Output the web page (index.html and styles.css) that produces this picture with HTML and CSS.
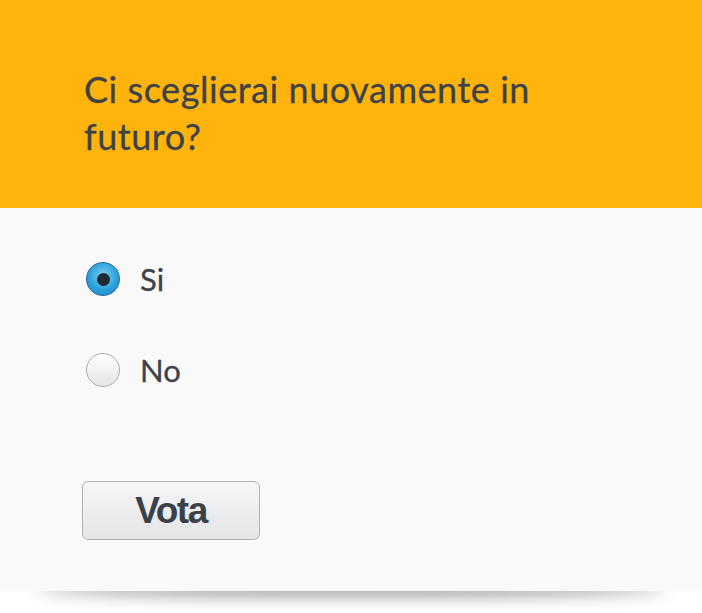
FILE: index.html
```html
<!DOCTYPE html>
<html lang="it">
<head>
<meta charset="utf-8">
<title>Sondaggio</title>
<link rel="stylesheet" href="styles.css">
</head>
<body>
<div class="card">
  <div class="header">
    <h1 class="question">Ci sceglierai nuovamente in futuro?</h1>
  </div>
  <form class="body">
    <label class="option">
      <span class="radio checked"><span class="dot"></span></span>
      <span class="label-text">Si</span>
    </label>
    <label class="option">
      <span class="radio"></span>
      <span class="label-text">No</span>
    </label>
    <button type="button" class="vote">Vota</button>
  </form>
</div>
</body>
</html>
```

FILE: styles.css
```css
html {
  margin: 0;
  padding: 0;
  background: #ffffff;
}
body {
  margin: 0;
  padding: 0;
  min-height: 613px;
  font-family: Lato, sans-serif;
  color: #3d4249;
}
.card {
  position: relative;
  width: 702px;
  background: #f9f9f9;
}
.card::after {
  content: "";
  position: absolute;
  left: 36px;
  right: 36px;
  bottom: 8px;
  height: 16px;
  border-radius: 50%;
  box-shadow: 0 14px 16px rgba(0, 0, 0, 0.38);
  z-index: -1;
}
.header {
  background: #ffb30d;
  height: 208px;
  box-sizing: border-box;
  padding: 66px 84px 0 84px;
}
.question {
  margin: 0;
  font-weight: normal;
  font-size: 36px;
  line-height: 47px;
  letter-spacing: 0.55px;
  width: 490px;
  color: #3d4249;
  -webkit-text-stroke: 0.3px #3d4249;
}
.body {
  margin: 0;
  padding: 52px 0 51px 82px;
  display: flex;
  flex-direction: column;
  align-items: flex-start;
}
.option {
  display: flex;
  align-items: center;
  gap: 20px;
  height: 38px;
  margin-bottom: 53px;
  padding-left: 4px;
}
.option + .option {
  margin-bottom: 92px;
}
.radio {
  width: 34px;
  height: 34px;
  border-radius: 50%;
  box-sizing: border-box;
  border: 1px solid #a8adb2;
  background: linear-gradient(#ffffff, #e4e5e8);
  display: flex;
  align-items: center;
  justify-content: center;
}
.radio.checked {
  border-color: #2a6a93;
  background: radial-gradient(circle at 50% 40%, #7fd0f2 0%, #2aa2dc 55%, #1a86c4 100%);
}
.dot {
  width: 13px;
  height: 13px;
  border-radius: 50%;
  background: #1f2a33;
}
.label-text {
  font-size: 31px;
  line-height: 38px;
  -webkit-text-stroke: 0.3px #3d4249;
}
.vote {
  width: 178px;
  height: 59px;
  border: 1px solid #aeb2b7;
  border-radius: 6px;
  background: linear-gradient(#f6f6f8, #e4e5e7);
  font-family: "Liberation Sans", Arial, sans-serif;
  font-weight: bold;
  font-size: 37px;
  letter-spacing: -1.5px;
  color: #3a4148;
  padding: 0;
}
```
